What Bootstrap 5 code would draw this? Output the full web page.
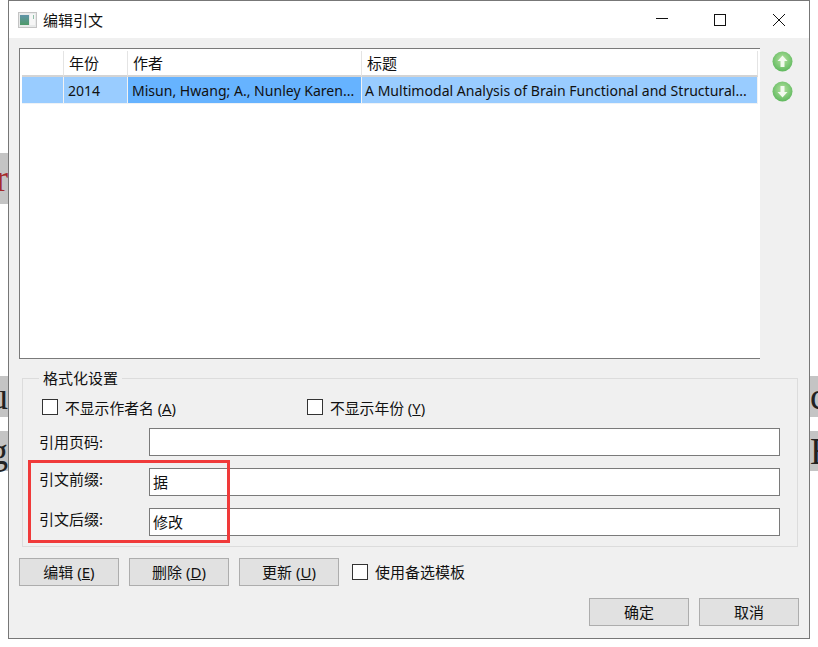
<!DOCTYPE html>
<html lang="zh-CN">
<head>
<meta charset="utf-8">
<title>编辑引文</title>
<link href="https://cdn.jsdelivr.net/npm/bootstrap@5.3.0/dist/css/bootstrap.min.css" rel="stylesheet">
<style>
html,body{margin:0;height:647px;overflow:hidden;background:#fff;}
body{font-family:"Noto Sans","Noto Sans CJK SC",sans-serif;font-size:15px;color:#111;line-height:1.2;}
.stage{width:818px;height:647px;}
.gutter{width:8px;flex:none;overflow:hidden;font-family:"Liberation Serif",serif;font-size:37px;line-height:1;}
.frag{height:41px;background:#c4c4c4;display:flex;align-items:center;color:#222;width:8px;}
.gutter-l .frag{justify-content:flex-end;}
.gutter-r .frag{justify-content:flex-start;}
.frag-r{height:51px;margin-top:153px;color:#a52a2a;}
.frag-u{margin-top:172px;}
.frag-g{margin-top:14px;height:40px;}
.frag-top{margin-top:376px;}
.dlg{width:802px;height:639px;border:1px solid #777;background:#f0f0f0;position:relative;flex:none;}
.ttl{height:37px;background:#fff;padding-left:9px;}
.ttl-text{font-size:15px;margin-left:6px;font-family:"Noto Sans CJK SC",sans-serif;}
.winbtn{width:58px;height:37px;display:flex;align-items:center;justify-content:center;}
.winbtn-x{width:60px;}
.content{padding:10px 0 0 10px;}
.tblbox{width:741px;height:311px;background:#fff;border:1px solid #7a7a7a;border-right:0;padding:2px 0 0 2px;}
.reftbl{width:736px;table-layout:fixed;border-collapse:separate;border-spacing:0;}
.reftbl th,.reftbl td{font-weight:400;height:27px;padding:0 0 0 4px;white-space:nowrap;overflow:hidden;}
.reftbl th{border-right:1px solid #e4e4e4;border-bottom:2px solid #d4d4d4;height:26px;background:#fff;padding-left:5px;font-family:"Noto Sans CJK SC",sans-serif;font-size:15px;}
.reftbl td{background:#99ccff;border-right:1px solid #f2f2f2;border-bottom:1px solid #eef2f6;font-size:14.05px;padding-top:3px;}
.reftbl td.cur{background:#66b3ff;}
.reftbl td.lastc{padding-left:3px;}
.arrows{width:46px;padding:3px 0 0 12px;gap:9px;}
.arrows svg{display:block;}
.grp{width:776px;height:169px;margin:19px 0 0 3px;border:1px solid #dcdcdc;position:relative;}
.grp-ttl{position:absolute;left:16px;top:-10px;background:#f0f0f0;padding:0 4px;line-height:18px;}
.chk{width:16px;height:16px;border:1px solid #333;background:#fff;flex:none;display:block;}
.chkrow{height:43px;padding:12px 0 0 19px;}
.chklab{margin-left:7px;white-space:nowrap;margin-top:5px;font-size:14.8px;}
.chklab-w{width:242px;flex:none;}
.frow{height:40px;padding-left:16px;}
.flab{width:110px;flex:none;margin-top:-7px;}
.flab-up{margin-top:-1px;}
.fbox{width:631px;height:28px;background:#fff;border:1px solid #7a7a7a;padding:0 3px;display:flex;align-items:center;}
.btnrow{margin-top:11px;height:28px;gap:10px;}
.wbtn{width:100px;height:28px;background:#e1e1e1;border:1px solid #adadad;border-radius:0;padding:0;font-size:15px;color:#111;line-height:1;}
.wchk{margin-left:3px;}
.wlab{margin-left:-3px;font-size:15px;margin-top:0;}
.foot{margin:12px 0 0 570px;gap:10px;}
.mark-box{position:absolute;left:19px;top:459px;width:202px;height:83px;border:3px solid #f03a3a;pointer-events:none;}
</style>
</head>
<body>
<div class="stage d-flex">
  <div class="gutter gutter-l">
    <div class="frag frag-r">r</div>
    <div class="frag frag-u">u</div>
    <div class="frag frag-g">g</div>
  </div>
  <div class="dlg">
    <div class="ttl d-flex align-items-center justify-content-between">
      <div class="d-flex align-items-center">
        <svg width="19" height="16" viewBox="0 0 19 16"><defs><linearGradient id="g1" x1="0" y1="0" x2="0" y2="1"><stop offset="0" stop-color="#5f93a8"/><stop offset="1" stop-color="#4e9a68"/></linearGradient></defs><rect x=".5" y=".5" width="18" height="15" fill="#e8eaea" stroke="#c4c4c4"/><rect x="2" y="3" width="9" height="10" fill="url(#g1)"/><rect x="12" y="2" width="5" height="11" fill="#f6f6f6"/><rect x="15" y="3" width="1" height="4" fill="#8fc0a8"/></svg>
        <span class="ttl-text">编辑引文</span>
      </div>
      <div class="d-flex">
        <div class="winbtn"><svg width="14" height="14" viewBox="0 0 14 14"><path d="M1 5.5H13" stroke="#111" fill="none"/></svg></div>
        <div class="winbtn"><svg width="14" height="14" viewBox="0 0 14 14"><rect x="1.5" y="1.5" width="11" height="11" stroke="#111" fill="none"/></svg></div>
        <div class="winbtn winbtn-x"><svg width="14" height="14" viewBox="0 0 14 14"><path d="M1 1L13 13M13 1L1 13" stroke="#111" fill="none"/></svg></div>
      </div>
    </div>
    <div class="content">
      <div class="d-flex">
        <div class="tblbox">
          <table class="reftbl">
            <colgroup><col style="width:42px"><col style="width:64px"><col style="width:234px"><col style="width:396px"></colgroup>
            <thead><tr><th></th><th>年份</th><th>作者</th><th>标题</th></tr></thead>
            <tbody><tr><td></td><td>2014</td><td class="cur">Misun, Hwang; A., Nunley Karen...</td><td class="lastc">A Multimodal Analysis of Brain Functional and Structural...</td></tr></tbody>
          </table>
        </div>
        <div class="arrows d-flex flex-column">
          <svg width="21" height="21" viewBox="0 0 21 21"><defs><radialGradient id="g2" cx=".5" cy=".4" r=".65"><stop offset="0" stop-color="#b4e2a0"/><stop offset="1" stop-color="#58b558"/></radialGradient></defs><circle cx="10.5" cy="10.5" r="10" fill="url(#g2)"/><path d="M10.5 4.5L15.5 10H12.5V16H8.5V10H5.5Z" fill="#f2faee"/></svg>
          <svg width="21" height="21" viewBox="0 0 21 21"><circle cx="10.5" cy="10.5" r="10" fill="url(#g2)"/><path d="M10.5 16.5L15.5 11H12.5V5H8.5V11H5.5Z" fill="#f2faee"/></svg>
        </div>
      </div>
      <div class="grp">
        <div class="grp-ttl">格式化设置</div>
        <div class="chkrow d-flex align-items-center">
          <span class="chk"></span><span class="chklab chklab-w">不显示作者名 (<u>A</u>)</span>
          <span class="chk"></span><span class="chklab">不显示年份 (<u>Y</u>)</span>
        </div>
        <div class="frow d-flex align-items-center"><span class="flab flab-up">引用页码:</span><div class="fbox"></div></div>
        <div class="frow d-flex align-items-center"><span class="flab">引文前缀:</span><div class="fbox">据</div></div>
        <div class="frow d-flex align-items-center"><span class="flab">引文后缀:</span><div class="fbox">修改</div></div>
      </div>
      <div class="btnrow d-flex align-items-center">
        <button type="button" class="btn wbtn">编辑 (<u>E</u>)</button>
        <button type="button" class="btn wbtn">删除 (<u>D</u>)</button>
        <button type="button" class="btn wbtn">更新 (<u>U</u>)</button>
        <span class="chk wchk"></span><span class="chklab wlab">使用备选模板</span>
      </div>
      <div class="foot d-flex">
        <button type="button" class="btn wbtn">确定</button>
        <button type="button" class="btn wbtn">取消</button>
      </div>
    </div>
    <div class="mark-box"></div>
  </div>
  <div class="gutter gutter-r">
    <div class="frag frag-top">c</div>
    <div class="frag frag-g">E</div>
  </div>
</div>
<script src="https://cdn.jsdelivr.net/npm/bootstrap@5.3.0/dist/js/bootstrap.bundle.min.js"></script>
</body>
</html>
